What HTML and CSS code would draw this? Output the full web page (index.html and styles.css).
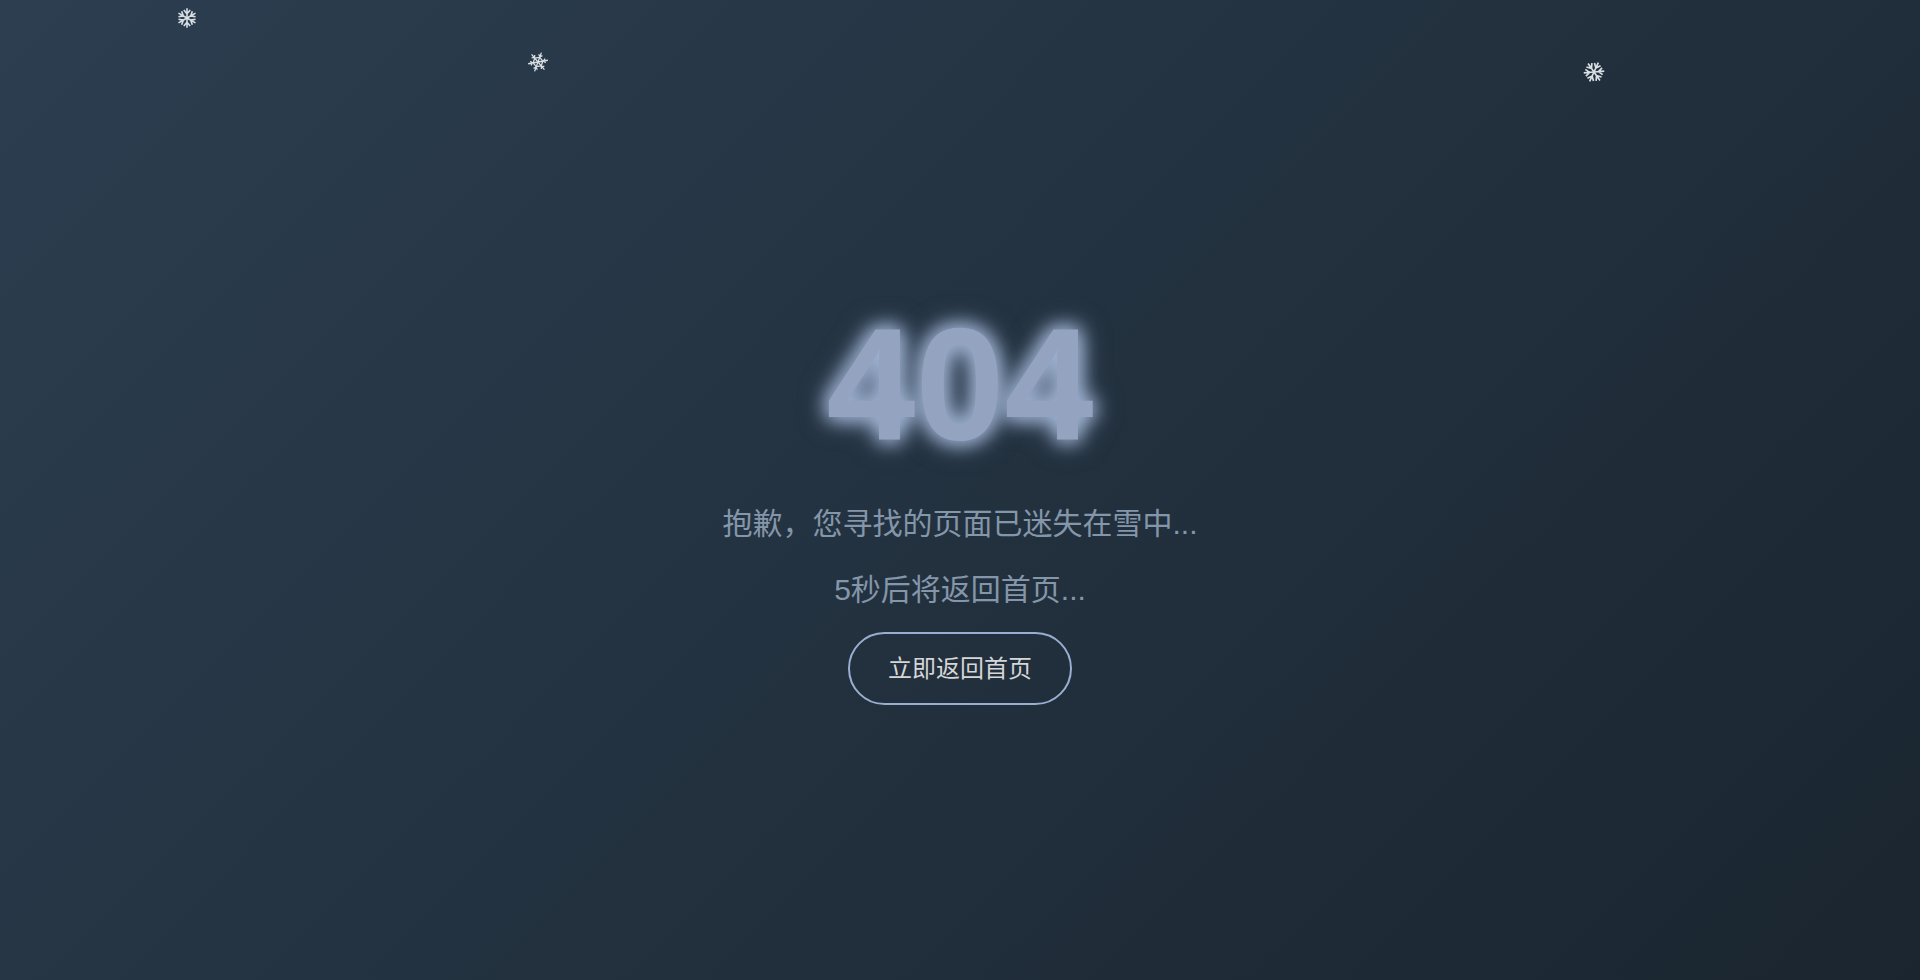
FILE: index.html
```html
<!DOCTYPE html>
<html lang="zh-CN">
<head>
<meta charset="utf-8">
<title>404</title>
<link rel="stylesheet" href="styles.css">
</head>
<body>
<svg class="defs" width="0" height="0" aria-hidden="true">
<defs>
<path id="arm-bold" d="M0 0V-9.8M0 -4.2L-3.2 -8M0 -4.2L3.2 -8"/>
<path id="arm-fine" d="M0 0V-10M0 -5.5L-2 -7.5M0 -5.5L2 -7.5M0 -5L4.33 -2.5"/>
<g id="flake-bold" stroke-width="1.6">
<use href="#arm-bold"/><use href="#arm-bold" transform="rotate(60)"/><use href="#arm-bold" transform="rotate(120)"/><use href="#arm-bold" transform="rotate(180)"/><use href="#arm-bold" transform="rotate(240)"/><use href="#arm-bold" transform="rotate(300)"/>
</g>
<g id="flake-fine" stroke-width="1.3">
<use href="#arm-fine"/><use href="#arm-fine" transform="rotate(60)"/><use href="#arm-fine" transform="rotate(120)"/><use href="#arm-fine" transform="rotate(180)"/><use href="#arm-fine" transform="rotate(240)"/><use href="#arm-fine" transform="rotate(300)"/>
</g>
</defs>
</svg>
<div class="snow" aria-hidden="true">
<svg class="flake flake-a" viewBox="-12 -12 24 24"><use href="#flake-bold"/></svg>
<svg class="flake flake-b" viewBox="-12 -12 24 24"><use href="#flake-fine" transform="rotate(20)"/></svg>
<svg class="flake flake-c" viewBox="-12 -12 24 24"><use href="#flake-bold" transform="rotate(25) scale(1.05)"/></svg>
</div>
<main class="container">
<h1 class="code">404</h1>
<p class="message">抱歉，您寻找的页面已迷失在雪中...</p>
<p class="message">5秒后将返回首页...</p>
<a class="home" href="/">立即返回首页</a>
</main>
</body>
</html>
```
FILE: styles.css
```css
* { box-sizing: border-box; margin: 0; padding: 0; }
body {
  min-height: 100vh;
  display: flex;
  justify-content: center;
  align-items: center;
  overflow: hidden;
  background: linear-gradient(135deg, #2c3e50, #1a252f);
  font-family: "Liberation Sans", "Noto Sans CJK SC", sans-serif;
  color: #d6d6d6;
}
.defs { position: absolute; }
.container { text-align: center; padding-top: 16px; }
.code {
  font-size: 160px;
  line-height: 184px;
  color: #94a3c0;
  text-shadow: 0 0 20px #9fb2d0, 0 0 20px #94a8c8, 0 0 30px rgba(148, 168, 200, 0.6);
}
.message { font-size: 30px; line-height: 36px; margin-top: 30px; color: #8496a9; }
.home {
  display: inline-block;
  margin-top: 24px;
  padding: 20px 38px;
  border: 2px solid #9aaed0;
  border-radius: 50px;
  font-size: 24px;
  line-height: 29px;
  color: #d6d6d6;
  text-decoration: none;
}
.flake {
  position: absolute;
  width: 24px;
  height: 24px;
  fill: none;
  stroke: #d8dee4;
}
.flake-a { left: 175px; top: 6px; }
.flake-b { left: 526px; top: 50px; }
.flake-c { left: 1582px; top: 60px; }
```
